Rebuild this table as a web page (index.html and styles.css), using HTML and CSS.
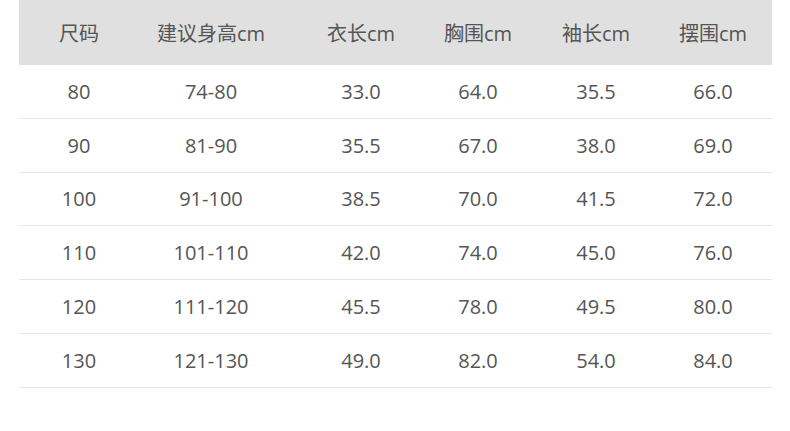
FILE: index.html
```html
<!DOCTYPE html>
<html lang="zh">
<head>
<meta charset="utf-8">
<link rel="stylesheet" href="styles.css">
</head>
<body>
<div class="table">
  <div class="row head">
    <div>尺码</div><div>建议身高cm</div><div>衣长cm</div><div>胸围cm</div><div>袖长cm</div><div>摆围cm</div><div></div>
  </div>
  <div class="row">
    <div>80</div><div>74-80</div><div>33.0</div><div>64.0</div><div>35.5</div><div>66.0</div><div></div>
  </div>
  <div class="row">
    <div>90</div><div>81-90</div><div>35.5</div><div>67.0</div><div>38.0</div><div>69.0</div><div></div>
  </div>
  <div class="row">
    <div>100</div><div>91-100</div><div>38.5</div><div>70.0</div><div>41.5</div><div>72.0</div><div></div>
  </div>
  <div class="row">
    <div>110</div><div>101-110</div><div>42.0</div><div>74.0</div><div>45.0</div><div>76.0</div><div></div>
  </div>
  <div class="row">
    <div>120</div><div>111-120</div><div>45.5</div><div>78.0</div><div>49.5</div><div>80.0</div><div></div>
  </div>
  <div class="row">
    <div>130</div><div>121-130</div><div>49.0</div><div>82.0</div><div>54.0</div><div>84.0</div><div></div>
  </div>
</div>
</body>
</html>
```

FILE: styles.css
```css
html, body {
  margin: 0;
  padding: 0;
  background: #ffffff;
}
body {
  font-family: "Open Sans", "Noto Sans CJK SC", sans-serif;
  font-size: 20px;
  color: #555555;
}
.table {
  width: 753px;
  margin-left: 19px;
}
.row {
  display: grid;
  grid-template-columns: 120px 144px 156px 78px 158px 76px 1fr;
  align-items: center;
  height: 52.8px;
  border-bottom: 1px solid #e6e6e6;
  text-align: center;
  white-space: nowrap;
}
.row > div {
  display: flex;
  justify-content: center;
}
.row.head {
  height: 65px;
  border-bottom: none;
  background: #e0e0e0;
}
```
